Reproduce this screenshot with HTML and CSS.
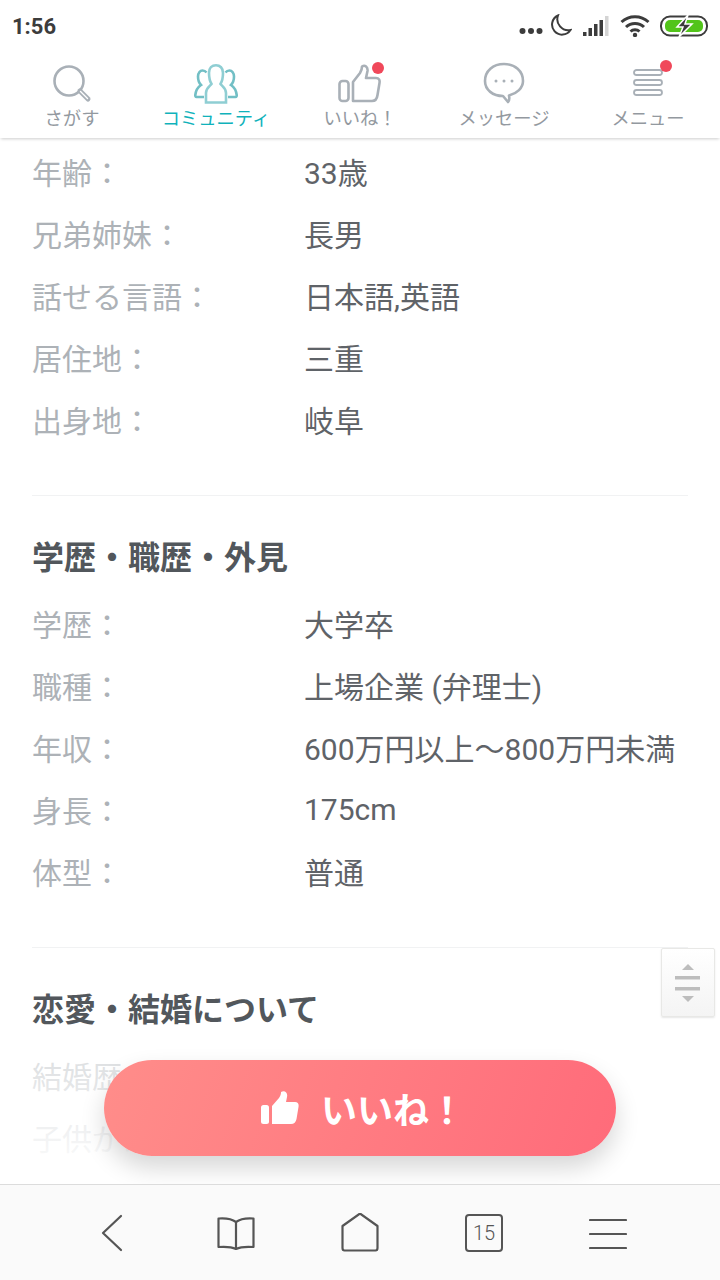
FILE: index.html
```html
<!DOCTYPE html>
<html lang="ja">
<head>
  <meta charset="UTF-8">
  <title>プロフィール</title>
  <meta name="viewport" content="width=device-width, initial-scale=1.0">
  <link rel="stylesheet" href="styles.css">
</head>
<body>
  <!-- ステータスバー -->
  <div class="status-bar">
    <div class="clock">1:56</div>
    <div class="status-icons">
      <svg class="st-dots" width="24" height="8" viewBox="0 0 24 8"><circle cx="3.500" cy="4" r="3" /><circle cx="12" cy="4" r="3" /><circle cx="20.500" cy="4" r="3" /></svg>
      <svg class="st-moon" width="22" height="22" viewBox="0 0 22 22"><path d="M8 1.500 A10 10 0 1 0 20.500 16 A11 11 0 0 1 8 1.500 Z" fill="none" stroke="#3c3c3c" stroke-width="2"/></svg>
      <svg class="st-signal" width="26" height="20" viewBox="0 0 26 20"><rect x="0" y="16" width="3.500" height="4" fill="#3c3c3c"/><rect x="5.500" y="12" width="3.500" height="8" fill="#3c3c3c"/><rect x="11" y="8" width="3.500" height="12" fill="#3c3c3c"/><rect x="16.500" y="4" width="3.500" height="16" fill="#3c3c3c"/><rect x="22" y="0" width="3.500" height="20" fill="#d4d4d4"/></svg>
      <svg class="st-wifi" width="30" height="22" viewBox="0 0 30 22"><path d="M1.500 7 A20 20 0 0 1 28.500 7 M6 12 A13 13 0 0 1 24 12 M10.500 16.500 A6.500 6.500 0 0 1 19.500 16.500" fill="none" stroke="#3c3c3c" stroke-width="3"/><circle cx="15" cy="20" r="2.200" fill="#3c3c3c"/></svg>
      <svg class="st-batt" width="48" height="22" viewBox="0 0 48 22"><rect x="1" y="1.500" width="46" height="19" rx="9" fill="none" stroke="#3c3c3c" stroke-width="2"/><rect x="5" y="5" width="38" height="12" rx="5" fill="#52c41a"/><path d="M28 0 L17 12 H23 L19 22 L32 9 H25 Z" fill="#3c3c3c" stroke="#fff" stroke-width="1.500"/></svg>
    </div>
  </div>

  <!-- タブ -->
  <nav class="tabs">
    <div class="tab">
      <svg width="40" height="40" viewBox="0 0 40 40" class="tab-icon"><circle cx="17" cy="17" r="14.500" fill="none" stroke="#a9b0b7" stroke-width="2.600"/><path d="M28 27 L36 35" stroke="#a9b0b7" stroke-width="5" stroke-linecap="round"/><path d="M28.500 27.500 L35.500 34.500" stroke="#fff" stroke-width="1.400" stroke-linecap="round"/></svg>
      <span class="tab-label">さがす</span>
    </div>
    <div class="tab active">
      <svg width="44" height="40" viewBox="0 0 44 40" class="tab-icon"><path d="M10 33 H2.500 C1.500 33 1.200 32 1.300 31 C2 25 4 23 7 21 C5 19 4 16 4 12.500 C4 9 6 6.500 8.500 6.500 C10 6.500 11.500 7.200 12.500 8.500" fill="none" stroke="#72bfc5" stroke-width="2.600"/><path d="M34 33 H41.500 C42.500 33 42.800 32 42.700 31 C42 25 40 23 37 21 C39 19 40 16 40 12.500 C40 9 38 6.500 35.500 6.500 C34 6.500 32.500 7.200 31.500 8.500" fill="none" stroke="#72bfc5" stroke-width="2.600"/><path d="M12 38.500 H32 V29 C32 24 28 22 26.500 20 C28 17.500 29 14 29 9 C29 4 26 1.300 22 1.300 C18 1.300 15 4 15 9 C15 14 16 17.500 17.500 20 C16 22 12 24 12 29 Z" fill="none" stroke="#8fced3" stroke-width="2.600"/></svg>
      <span class="tab-label">コミュニティ</span>
    </div>
    <div class="tab">
      <div class="icon-wrap">
        <svg width="44" height="40" viewBox="0 0 44 40" class="tab-icon"><rect x="1.500" y="17" width="9" height="20" rx="3" fill="none" stroke="#a9b0b7" stroke-width="2.600"/><path d="M15 18 L22 9 C24 6 24 4 24 2.500 C27 0.500 30 3 29.500 7 L28 14 H38 C41 14 42 16 41.500 19 L39.500 31 C39 35 37 37 34 37 H15 Z" fill="none" stroke="#a9b0b7" stroke-width="2.600" stroke-linejoin="round"/></svg>
        <span class="dot dot-like"></span>
      </div>
      <span class="tab-label">いいね！</span>
    </div>
    <div class="tab">
      <svg width="42" height="42" viewBox="0 0 42 42" class="tab-icon"><path d="M21 2 C10 2 2 9 2 19 C2 28 10 34 20 34 L25 40 C26 39 26.500 36 26 33.500 C34 31.500 40 26 40 19 C40 9 32 2 21 2 Z" fill="none" stroke="#a9b0b7" stroke-width="2.600" stroke-linejoin="round"/><circle cx="13" cy="19" r="1.500" fill="#a9b0b7"/><circle cx="21" cy="19" r="1.500" fill="#a9b0b7"/><circle cx="29" cy="19" r="1.500" fill="#a9b0b7"/></svg>
      <span class="tab-label">メッセージ</span>
    </div>
    <div class="tab">
      <div class="icon-wrap">
        <svg width="32" height="27" viewBox="0 0 32 27" class="tab-icon menu-icon"><rect x="2" y="1" width="28" height="5" rx="2.500" fill="none" stroke="#a9b0b7" stroke-width="1.800"/><rect x="2" y="11" width="28" height="5" rx="2.500" fill="none" stroke="#a9b0b7" stroke-width="1.800"/><rect x="2" y="21" width="28" height="5" rx="2.500" fill="none" stroke="#a9b0b7" stroke-width="1.800"/></svg>
        <span class="dot dot-menu"></span>
      </div>
      <span class="tab-label">メニュー</span>
    </div>
  </nav>

  <!-- プロフィール -->
  <main class="content">
    <section class="profile-section first">
      <dl class="rows">
        <div class="row"><dt>年齢：</dt><dd>33歳</dd></div>
        <div class="row"><dt>兄弟姉妹：</dt><dd>長男</dd></div>
        <div class="row"><dt>話せる言語：</dt><dd>日本語,英語</dd></div>
        <div class="row"><dt>居住地：</dt><dd>三重</dd></div>
        <div class="row"><dt>出身地：</dt><dd>岐阜</dd></div>
      </dl>
    </section>
    <section class="profile-section">
      <h2>学歴・職歴・外見</h2>
      <dl class="rows">
        <div class="row"><dt>学歴：</dt><dd>大学卒</dd></div>
        <div class="row"><dt>職種：</dt><dd>上場企業 (弁理士)</dd></div>
        <div class="row"><dt>年収：</dt><dd>600万円以上〜800万円未満</dd></div>
        <div class="row"><dt>身長：</dt><dd>175cm</dd></div>
        <div class="row"><dt>体型：</dt><dd>普通</dd></div>
      </dl>
    </section>
    <section class="profile-section">
      <h2>恋愛・結婚について</h2>
      <dl class="rows">
        <div class="row"><dt>結婚歴：</dt></div>
        <div class="row"><dt>子供がほしいか：</dt></div>
      </dl>
    </section>
    <div class="fade"></div>
    <div class="scroll-handle">
      <svg width="26" height="38" viewBox="0 0 26 38"><path d="M13 0 L19 6 H7 Z" fill="#bdbdbd"/><rect x="0" y="12" width="25" height="3.500" fill="#bdbdbd"/><rect x="0" y="23" width="25" height="3.500" fill="#bdbdbd"/><path d="M7 32 H19 L13 38 Z" fill="#bdbdbd"/></svg>
    </div>
    <button class="like-button">
      <svg width="38" height="34" viewBox="0 0 38 34"><rect x="0" y="14" width="8" height="19" rx="2.500" fill="#fff"/><path d="M11 15 L18 7 C20 4 20 2 20 1 C24 -1 27 2 26 6 L25 11 H34 C37 11 38 13 37.500 16 L35.500 28 C35 31 33 33 30 33 H11 Z" fill="#fff"/></svg>
      <span>いいね！</span>
    </button>
  </main>

  <!-- ブラウザのバー -->
  <footer class="browser-bar">
    <div class="bar-item"><svg width="22" height="38" viewBox="0 0 22 38"><path d="M20 2 L2 19 L20 36" fill="none" stroke="#555" stroke-width="2.200" stroke-linecap="round" stroke-linejoin="round"/></svg></div>
    <div class="bar-item"><svg width="38" height="34" viewBox="0 0 38 34"><path d="M19 6 C15 3 8 2 1.500 2.500 V31 C8 30.500 15 31 19 33 C23 31 30 30.500 36.500 31 V2.500 C30 2 23 3 19 6 Z M19 6 V33" fill="none" stroke="#555" stroke-width="2.200" stroke-linejoin="round"/></svg></div>
    <div class="bar-item"><svg width="38" height="40" viewBox="0 0 38 40"><path d="M19 0.500 L36.500 13 V35 C36.500 37 35.500 37.500 34.500 37.500 H3.500 C2.500 37.500 1.500 37 1.500 35 V13 Z" fill="none" stroke="#555" stroke-width="2.200" stroke-linejoin="round"/></svg></div>
    <div class="bar-item"><div class="tab-count">15</div></div>
    <div class="bar-item"><svg width="38" height="32" viewBox="0 0 38 32"><path d="M1 3 H37 M1 17 H37 M1 31 H37" fill="none" stroke="#555" stroke-width="2.200" stroke-linecap="round"/></svg></div>
  </footer>
</body>
</html>
```

FILE: styles.css
```css
* {
  box-sizing: border-box;
}

body {
  margin: 0;
  width: 720px;
  height: 1280px;
  display: flex;
  flex-direction: column;
  overflow: hidden;
  background-color: #fff;
  font-family: Roboto, "Noto Sans CJK JP", sans-serif;
}

.status-bar {
  height: 52px;
  flex: none;
  display: flex;
  justify-content: space-between;
  align-items: center;
  padding: 0 12px;
}

.clock {
  font-family: Roboto, sans-serif;
  font-size: 22px;
  font-weight: 700;
  color: #3c3c3c;
}

.status-icons {
  display: flex;
  align-items: center;
  gap: 10px;
  fill: #3c3c3c;
}

.st-dots {
  margin-top: 10px;
  margin-right: -3px;
}

.st-moon {
  margin-right: 1px;
  margin-top: -3px;
}

.st-signal {
  margin-right: 1px;
}

.tabs {
  height: 86px;
  flex: none;
  display: flex;
  position: relative;
  z-index: 2;
  background-color: #fff;
  box-shadow: 0 2px 3px -1px rgba(0, 0, 0, 0.2);
}

.tab {
  flex: 1;
  display: flex;
  flex-direction: column;
  align-items: center;
  justify-content: flex-end;
  padding-bottom: 7px;
}

.tab-icon {
  display: block;
}

.menu-icon {
  margin-bottom: 8px;
}

.tab-label {
  margin-top: 3px;
  font-size: 18.3px;
  line-height: 24px;
  color: #93999f;
}

.tab.active .tab-label {
  color: #10b2bb;
}

.icon-wrap {
  position: relative;
}

.dot {
  position: absolute;
  width: 12px;
  height: 12px;
  border-radius: 50%;
  background-color: #f0485a;
}

.dot-like {
  top: -2px;
  right: -2px;
}

.dot-menu {
  top: -9px;
  right: -8px;
}

.content {
  flex: 1;
  position: relative;
  overflow: hidden;
  padding: 2px 32px 0;
}

.profile-section {
  padding: 40px 0 45px;
  border-bottom: 1px solid #f1f2f3;
}

.profile-section.first {
  padding: 0 0 45px;
}

.profile-section h2 {
  margin: 0 0 12px;
  font-size: 32px;
  line-height: 44px;
  font-weight: 700;
  color: #52575c;
}

.rows {
  margin: 0;
}

.row {
  display: flex;
  height: 62px;
  align-items: center;
  font-size: 30px;
}

.row dt {
  width: 272px;
  color: #adb2b7;
}

.row dd {
  margin: 0;
  color: #5f6368;
  white-space: nowrap;
}

.fade {
  position: absolute;
  left: 0;
  right: 0;
  bottom: 0;
  height: 140px;
  background: linear-gradient(to bottom, rgba(255, 255, 255, 0.55), #fff);
}

.scroll-handle {
  position: absolute;
  top: 810px;
  left: 661px;
  width: 54px;
  height: 69px;
  display: flex;
  align-items: center;
  justify-content: center;
  border: 1px solid #e8e8e6;
  border-radius: 2px;
  background: linear-gradient(to bottom, #fff, #f4f4f4);
  box-shadow: 0 1px 2px rgba(0, 0, 0, 0.1);
}

.like-button {
  position: absolute;
  left: 104px;
  top: 922px;
  width: 512px;
  height: 96px;
  display: flex;
  align-items: center;
  justify-content: center;
  gap: 22px;
  padding: 0 0 0 6px;
  border: none;
  border-radius: 48px;
  background: linear-gradient(110deg, #ff8d8a, #ff6b7a);
  box-shadow: 0 12px 24px rgba(0, 0, 0, 0.16);
  color: #fff;
  font-family: "Noto Sans CJK JP", sans-serif;
  font-size: 36px;
  font-weight: 700;
}

.browser-bar {
  height: 96px;
  flex: none;
  display: flex;
  align-items: center;
  padding: 0 50px;
  border-top: 1px solid #dcdcdc;
  background-color: #fafafa;
}

.bar-item {
  width: 124px;
  display: flex;
  align-items: center;
  justify-content: center;
}

.tab-count {
  width: 38px;
  height: 38px;
  display: flex;
  align-items: center;
  justify-content: center;
  border: 2px solid #555;
  border-radius: 4px;
  color: #555;
  font-family: Roboto, sans-serif;
  font-weight: 300;
  font-size: 20px;
}
```
